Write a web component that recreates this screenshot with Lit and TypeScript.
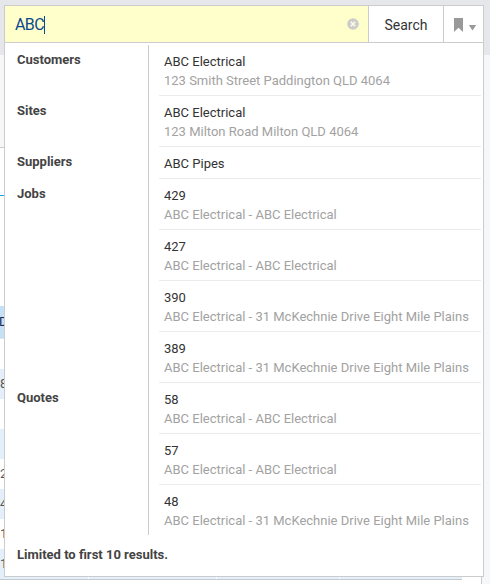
import { LitElement, html, css, nothing } from "lit";
import { customElement } from "lit/decorators.js";

interface Result {
  title: string;
  detail?: string;
}
interface Group {
  label: string;
  items: Result[];
}

const GROUPS: Group[] = [
  { label: "Customers", items: [{ title: "ABC Electrical", detail: "123 Smith Street Paddington QLD 4064" }] },
  { label: "Sites", items: [{ title: "ABC Electrical", detail: "123 Milton Road Milton QLD 4064" }] },
  { label: "Suppliers", items: [{ title: "ABC Pipes" }] },
  {
    label: "Jobs",
    items: [
      { title: "429", detail: "ABC Electrical - ABC Electrical" },
      { title: "427", detail: "ABC Electrical - ABC Electrical" },
      { title: "390", detail: "ABC Electrical - 31 McKechnie Drive Eight Mile Plains" },
      { title: "389", detail: "ABC Electrical - 31 McKechnie Drive Eight Mile Plains" },
    ],
  },
  {
    label: "Quotes",
    items: [
      { title: "58", detail: "ABC Electrical - ABC Electrical" },
      { title: "57", detail: "ABC Electrical - ABC Electrical" },
      { title: "48", detail: "ABC Electrical - 31 McKechnie Drive Eight Mile Plains" },
    ],
  },
];

/* Table rows of the page behind the search panel. */
const ROWS = ["", "8", "", "", "2", "4", "1", "1"];

@customElement("page-backdrop")
export class PageBackdrop extends LitElement {
  static styles = css`
    :host { display: flex; flex-direction: column; height: 584px; background: #f5f7f8; }
    .top { height: 55px; flex: none; background: #e6e7eb; }
    .space { height: 92px; flex: none; }
    .card {
      flex: 1;
      width: 481px;
      background: #fff;
      border-top: 1px solid #ccc;
      border-right: 1px solid #ccc;
      color: #555;
      font-size: 13px;
    }
    .tabs { height: 47px; border-bottom: 1px solid #1ba3dc; }
    .filters { height: 110px; }
    .head { height: 32px; line-height: 32px; background: #c5e1f5; border-bottom: 1px solid #e4e4e4; color: #1d2a55; }
    .table { width: 462px; border-bottom: 1px solid #c4c9cd; }
    .row { display: grid; grid-template-columns: 88px 127px 122px 1fr; gap: 1px; height: 30px; line-height: 29px; }
    .row.odd .cell { background: #e3f0fc; }
    .cell { white-space: nowrap; }
    .head span { margin-left: -1px; }
  `;
  render() {
    return html`
      <div class="top"></div>
      <div class="space"></div>
      <div class="card">
        <div class="tabs"></div>
        <div class="filters"></div>
        <div class="head"><span>D</span></div>
        <div class="table">
          ${ROWS.map(
            (t, i) => html`<div class="row ${i % 2 ? "odd" : ""}">
              <div class="cell">${t}</div><div class="cell"></div><div class="cell"></div><div class="cell"></div>
            </div>`
          )}
        </div>
      </div>
    `;
  }
}

@customElement("search-bar")
export class SearchBar extends LitElement {
  static styles = css`
    :host { display: flex; height: 36px; border-bottom: 1px solid #ccc; }
    .field { flex: 1; display: flex; align-items: center; background: #ffffcc; padding: 0 9px 0 10px; }
    .query { font-size: 16px; line-height: 20px; padding-top: 2px; color: #0b4a8c; letter-spacing: -0.6px; }
    .caret { width: 1px; height: 18px; margin-top: 1px; background: #0b4a8c; }
    .clear { margin-left: auto; display: block; }
    .search { width: 74px; border-left: 1px solid #ccc; text-align: center; font-size: 14px; line-height: 39px; color: #333; }
    .mark { width: 39px; border-left: 1px solid #ccc; }
    svg { display: block; }
  `;
  render() {
    return html`
      <div class="field">
        <span class="query">ABC</span><span class="caret"></span>
        <svg class="clear" width="12" height="12" viewBox="0 0 12 12">
          <circle cx="6" cy="6" r="5.8" fill="#ccc" />
          <path d="M3.8 3.8L8.2 8.2M8.2 3.8L3.8 8.2" stroke="#fffde0" stroke-width="1.6" />
        </svg>
      </div>
      <div class="search">Search</div>
      <div class="mark">
        <svg width="39" height="36" viewBox="0 0 39 36">
          <path d="M10 12h9v14l-4.500-4.200L10 26z" fill="#999" />
          <path d="M24.800 19h7.400l-3.700 5.600z" fill="#999" />
        </svg>
      </div>
    `;
  }
}

@customElement("search-results")
export class SearchResults extends LitElement {
  static styles = css`
    :host { display: block; padding: 2px 2px 0 12px; font-size: 13px; }
    .groups { display: flex; flex-direction: column; }
    .group { display: grid; grid-template-columns: 131px 1fr; }
    .label { font-weight: 700; line-height: 16px; padding-top: 7px; color: #444; }
    .items { border-left: 1px solid #ccc; padding-left: 10px; }
    .item { padding: 7px 0 5px 5px; border-bottom: 1px solid #ececec; white-space: nowrap; }
    .group:last-child .item:last-child { border-bottom: 0; }
    .title, .detail { line-height: 19px; }
    .title { color: #333; }
    .detail { color: #a2a2a2; }
    .note { font-weight: 700; color: #444; line-height: 16px; margin-top: 12px; }
  `;
  render() {
    return html`
      <div class="groups">
        ${GROUPS.map(
          (g) => html`<div class="group">
            <div class="label">${g.label}</div>
            <div class="items">
              ${g.items.map(
                (r) => html`<div class="item">
                  <div class="title">${r.title}</div>
                  ${r.detail ? html`<div class="detail">${r.detail}</div>` : nothing}
                </div>`
              )}
            </div>
          </div>`
        )}
      </div>
      <div class="note">Limited to first 10 results.</div>
    `;
  }
}

@customElement("app-root")
export class AppRoot extends LitElement {
  static styles = css`
    :host { display: block; position: relative; width: 490px; height: 584px; overflow: hidden; font-family: Roboto, "Liberation Sans", sans-serif; }
    .panel { position: absolute; top: 5px; left: 4px; width: 478px; height: 570px; border: 1px solid #ccc; background: #fff; }
  `;
  render() {
    return html`
      <page-backdrop></page-backdrop>
      <div class="panel">
        <search-bar></search-bar>
        <search-results></search-results>
      </div>
    `;
  }
}
